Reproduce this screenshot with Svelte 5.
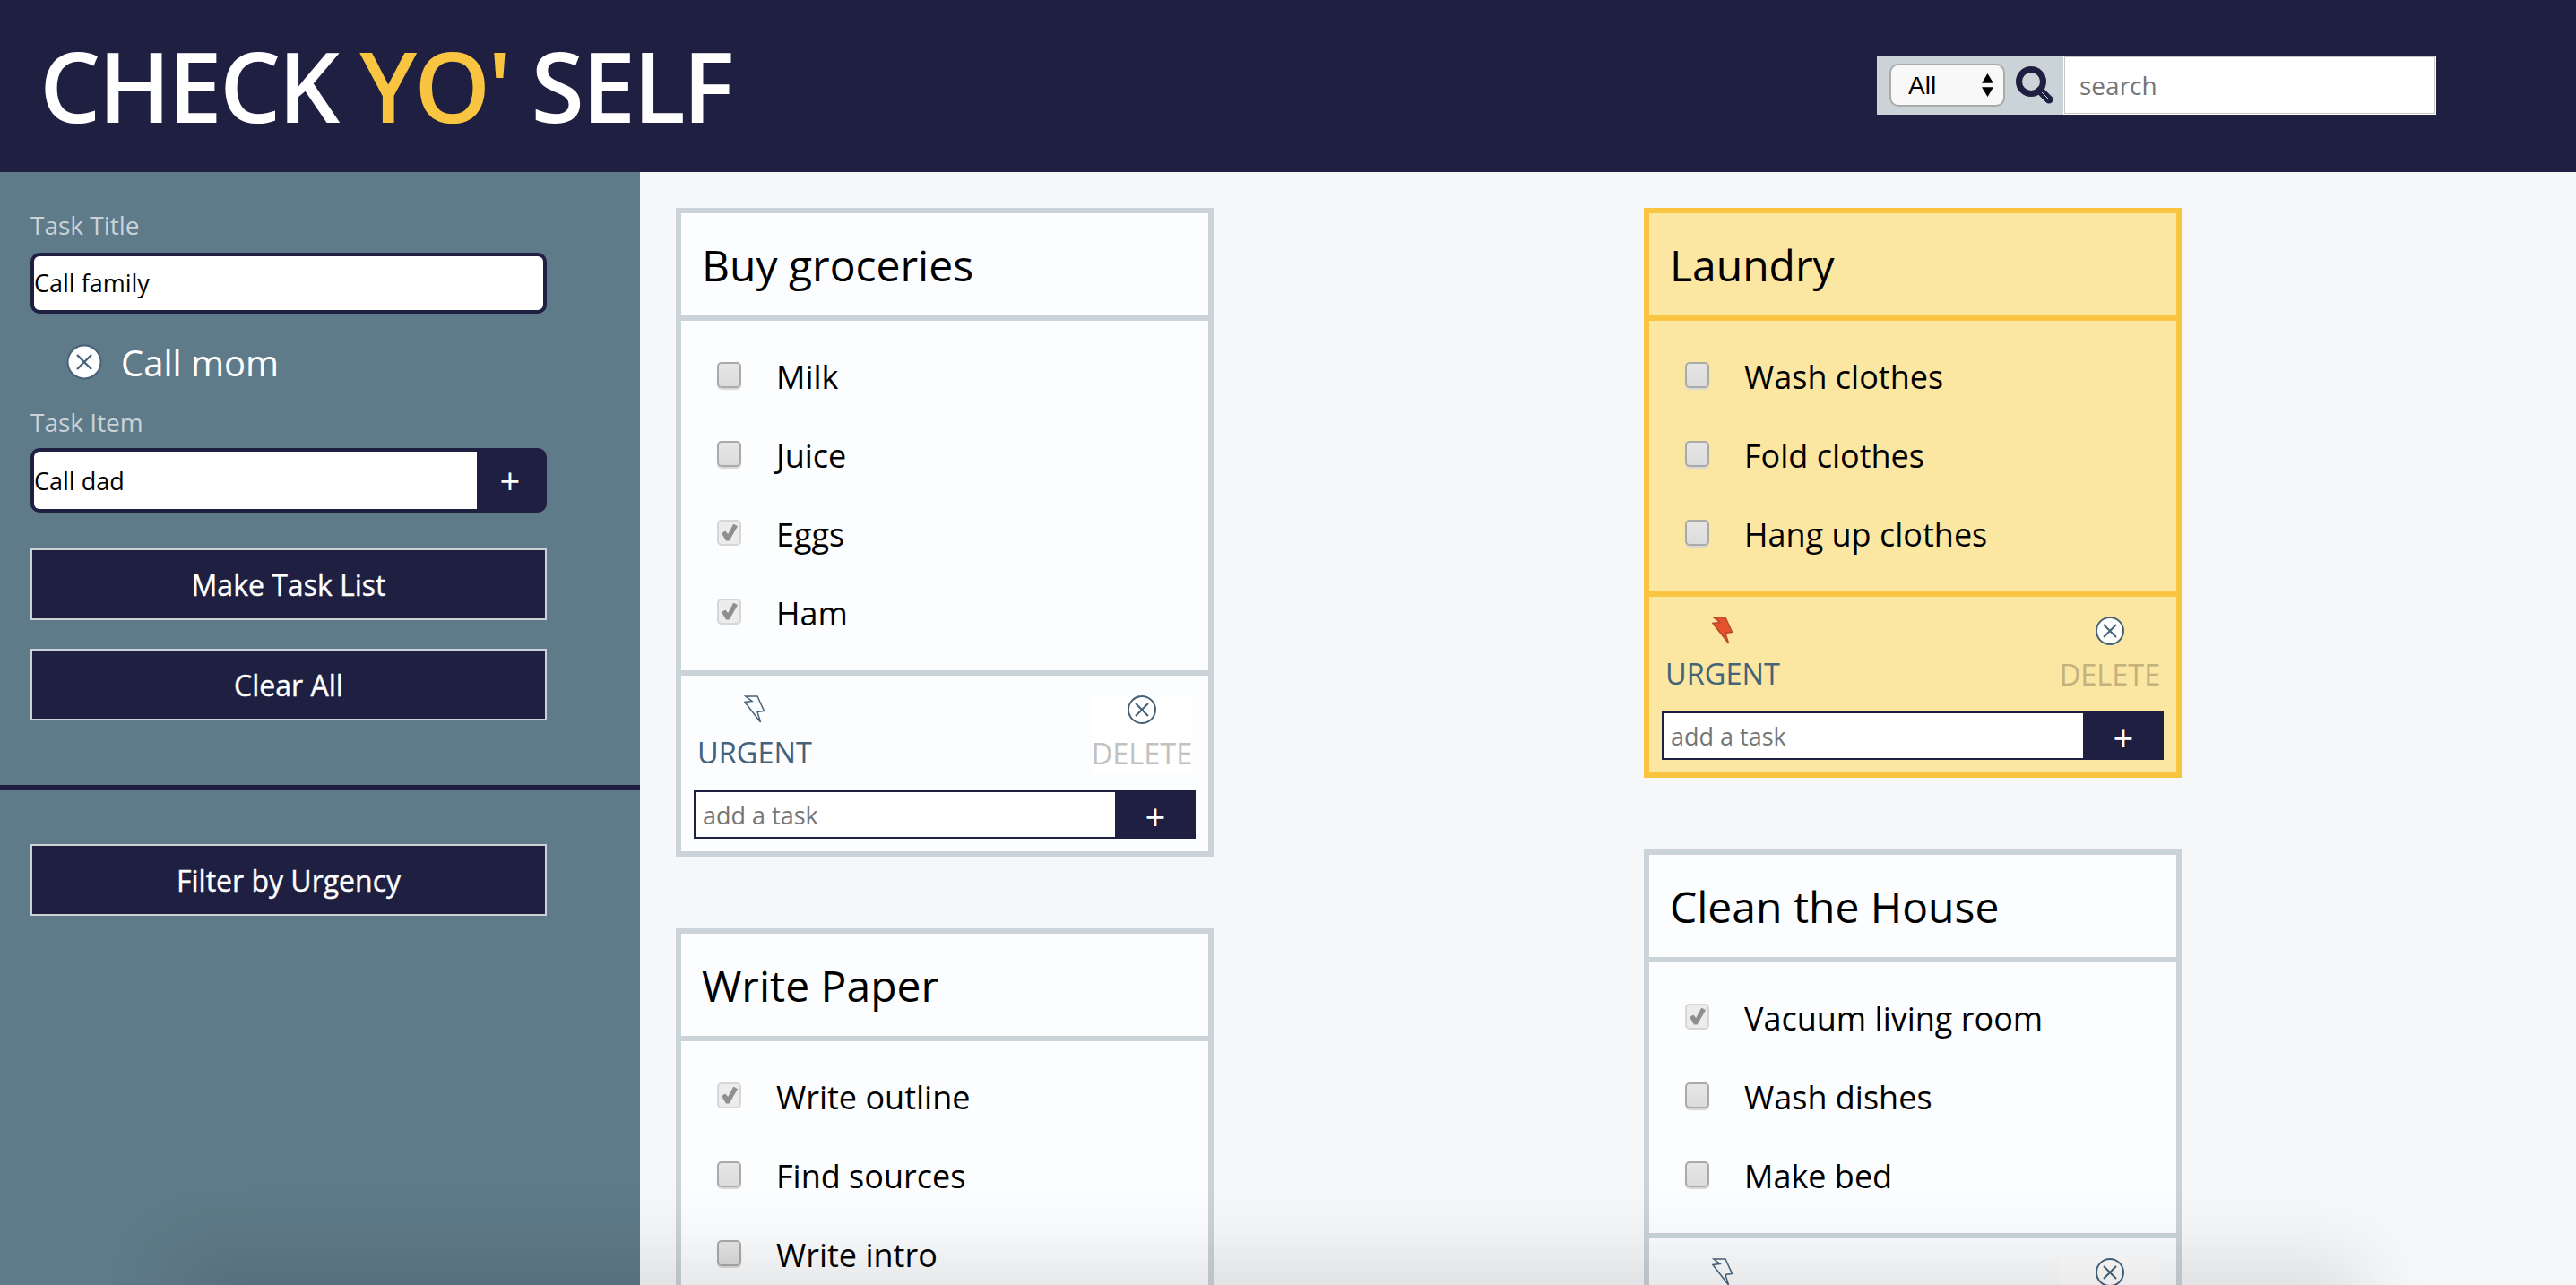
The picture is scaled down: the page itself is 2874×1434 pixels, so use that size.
<script>
  let columns = [
    [
      { title: "Buy groceries", items: [["Milk", false], ["Juice", false], ["Eggs", true], ["Ham", true]], urgent: false },
      { title: "Write Paper", items: [["Write outline", true], ["Find sources", false], ["Write intro", false]], urgent: false },
    ],
    [
      { title: "Laundry", items: [["Wash clothes", false], ["Fold clothes", false], ["Hang up clothes", false]], urgent: true },
      { title: "Clean the House", items: [["Vacuum living room", true], ["Wash dishes", false], ["Make bed", false]], urgent: false },
    ],
  ];
</script>

<div class="page">
  <header class="top">
    <h1>CHECK <span class="yo">YO'</span> SELF</h1>
    <div class="search">
      <div class="select-wrap">
        <select class="filter"><option>All</option></select>
        <svg class="arrows" viewBox="0 0 14 34" preserveAspectRatio="none">
          <path d="M7 0 L14 14 H0 Z M7 34 L0 20 H14 Z" fill="#000" />
        </svg>
      </div>
      <svg class="glass" viewBox="0 0 42 42" width="42" height="42">
        <circle cx="17" cy="17" r="13.500" fill="none" stroke="#1f2041" stroke-width="7" />
        <path d="M27 27 L37 37" stroke="#1f2041" stroke-width="9" stroke-linecap="round" />
        <path d="M29 29 L37 37" stroke="#c9d3d8" stroke-width="1" />
      </svg>
      <input class="search-box" placeholder="search" />
    </div>
  </header>

  <div class="body">
    <aside class="side">
      <div class="form">
        <label class="lbl" for="title">Task Title</label>
        <input id="title" class="title-input" value="Call family" />
        <div class="pending">
          <svg class="x" viewBox="0 0 40 40" width="40" height="40">
            <circle cx="20" cy="20" r="18.500" fill="#fff" stroke="#466279" stroke-width="2" />
            <path d="M12 12 L28 28 M28 12 L12 28" stroke="#466279" stroke-width="2.400" />
          </svg>
          <span>Call mom</span>
        </div>
        <label class="lbl" for="item">Task Item</label>
        <div class="item-row">
          <input id="item" value="Call dad" />
          <button class="plus">+</button>
        </div>
        <button class="wide make">Make Task List</button>
        <button class="wide clear">Clear All</button>
      </div>
      <div class="rule"></div>
      <button class="wide urgency">Filter by Urgency</button>
    </aside>

    <main class="board">
      {#each columns as col}
        <div class="col">
          {#each col as card}
            <section class="card" class:hot={card.urgent}>
              <h2>{card.title}</h2>
              <ul>
                {#each card.items as [text, done]}
                  <li><input type="checkbox" checked={done} /><span>{text}</span></li>
                {/each}
              </ul>
              <div class="foot">
                <div class="actions">
                  <div class="act urgent">
                    <svg viewBox="0 0 24 31" width="24" height="31">
                      <path d="M2 1 H15 L22.500 17.500 L15 18.500 L18.500 30 L1 7.500 L9 6.500 Z"
                        fill={card.urgent ? "#e4522c" : "none"}
                        stroke={card.urgent ? "#b9492e" : "#466279"}
                        stroke-width="1.500" />
                    </svg>
                    <span>URGENT</span>
                  </div>
                  <div class="act delete">
                    <svg viewBox="0 0 32 32" width="32" height="32">
                      <circle cx="16" cy="16" r="15" fill={card.urgent ? "#fff" : "none"} stroke="#466279" stroke-width="2" />
                      <path d="M9 9 L23 23 M23 9 L9 23" stroke="#466279" stroke-width="2" />
                    </svg>
                    <span>DELETE</span>
                  </div>
                </div>
                <div class="add">
                  <input placeholder="add a task" />
                  <button>+</button>
                </div>
              </div>
            </section>
          {/each}
        </div>
      {/each}
    </main>
  </div>
  <div class="fade"></div>
</div>

<style>
  :global(body) {
    margin: 0;
    overflow: hidden;
    font-family: "Open Sans", sans-serif;
  }

  .page {
    height: 1434px;
    overflow: hidden;
    position: relative;
    background: #f6f7f9;
  }

  .top {
    height: 192px;
    background: #1f2041;
    display: flex;
    align-items: center;
    justify-content: space-between;
    padding: 0 156px 0 44px;
    box-sizing: border-box;
  }

  h1 {
    margin: 0;
    font-size: 108px;
    font-weight: 600;
    color: #fff;
    letter-spacing: -3px;
    line-height: 1;
  }

  .yo {
    color: #f9c440;
  }

  .search {
    display: flex;
    align-items: center;
    height: 66px;
    width: 624px;
    margin-top: -2px;
    background: #c9d3d8;
    box-sizing: border-box;
    padding-left: 14px;
  }

  .select-wrap {
    position: relative;
    display: flex;
  }

  .filter {
    appearance: none;
    width: 129px;
    height: 48px;
    border: 2px solid #aaa;
    border-radius: 10px;
    background: #f8f8f8;
    font-family: "Liberation Sans", sans-serif;
    font-size: 28px;
    padding: 0 0 0 19px;
    color: #000;
  }

  .arrows {
    position: absolute;
    right: 13px;
    top: 11px;
    width: 13px;
    height: 26px;
    pointer-events: none;
  }

  .glass {
    margin: 0 11px 0 12px;
    flex: none;
  }

  .search-box {
    flex: 1;
    min-width: 0;
    height: 66px;
    box-sizing: border-box;
    border: 2px solid #c6c6c6;
    outline: 1px solid #fff;
    outline-offset: -1px;
    font-family: inherit;
    font-size: 28px;
    padding: 0 16px;
  }

  .body {
    display: flex;
    height: 1242px;
  }

  .side {
    width: 714px;
    flex: none;
    background: #5f7a88;
    box-sizing: border-box;
    padding-top: 40px;
  }

  .form {
    padding: 0 104px 0 34px;
    display: flex;
    flex-direction: column;
  }

  .lbl {
    font-size: 28px;
    line-height: 38px;
    color: #c9d3d8;
  }

  .title-input {
    margin-top: 12px;
    height: 68px;
    box-sizing: border-box;
    border: 4px solid #1f2041;
    border-radius: 10px;
    padding: 0 0 2px;
    font-family: inherit;
    font-size: 27px;
    background: #fff;
  }

  .pending {
    display: flex;
    align-items: center;
    gap: 21px;
    height: 80px;
    margin: 14px 0 8px 40px;
    font-size: 40px;
    color: #fff;
  }

  .item-row {
    display: flex;
    margin-top: 10px;
    height: 72px;
    border: 4px solid #1f2041;
    border-radius: 10px;
    background: #1f2041;
    box-sizing: border-box;
    overflow: hidden;
  }

  .item-row input {
    flex: 1;
    min-width: 0;
    border: 0;
    padding: 0;
    font-family: inherit;
    font-size: 27px;
    border-radius: 4px 0 0 4px;
  }

  .plus {
    width: 74px;
    flex: none;
    border: 0;
    background: #1f2041;
    color: #fff;
    font-family: inherit;
    font-size: 40px;
    font-weight: 500;
    padding: 0;
  }

  .wide {
    height: 80px;
    border: 2px solid #c9d3d8;
    background: #1f2041;
    color: #fff;
    font-family: inherit;
    font-size: 32px;
    font-weight: 500;
    -webkit-text-stroke: 0.4px #fff;
    padding: 0;
  }

  .make {
    margin-top: 40px;
  }

  .clear {
    margin-top: 32px;
  }

  .rule {
    height: 6px;
    margin-top: 72px;
    background: #1f2041;
  }

  .urgency {
    display: block;
    width: 576px;
    margin: 60px 0 0 34px;
  }

  .board {
    flex: 1;
    display: flex;
    gap: 480px;
    padding: 40px 0 0 40px;
    overflow: hidden;
  }

  .col {
    width: 600px;
    flex: none;
    display: flex;
    flex-direction: column;
    gap: 80px;
  }

  .card {
    flex: none;
    border: 6px solid #c9d3d8;
    background: #fcfdff;
  }

  .card h2 {
    margin: 0;
    height: 114px;
    display: flex;
    align-items: center;
    padding-left: 23px;
    font-size: 48px;
    font-weight: 400;
    color: #000;
  }

  .card ul {
    list-style: none;
    margin: 0;
    padding: 18px 0 20px;
    border-top: 6px solid #c9d3d8;
    border-bottom: 6px solid #c9d3d8;
  }

  .card li {
    height: 88px;
    display: flex;
    align-items: center;
    padding-left: 40px;
    font-size: 36px;
    color: #000;
  }

  .card li span {
    margin-left: 39px;
  }

  .card li input {
    appearance: none;
    position: relative;
    flex: none;
    width: 27px;
    height: 29px;
    margin: -4px 0 0;
    box-sizing: border-box;
    border: 2px solid #aaa;
    border-radius: 5px;
    background: linear-gradient(#e6e6e6, #dcdcdc);
    box-shadow: 0 2px 1px #d8d8d8;
  }

  .card li input:checked {
    border-color: #d6d6d6;
    background: #ececec;
    box-shadow: none;
  }

  .card li input:checked::after {
    content: "";
    position: absolute;
    left: 3px;
    top: 3px;
    width: 18px;
    height: 19px;
    background: #8f8f8f;
    clip-path: polygon(0 55%, 24% 42%, 40% 60%, 74% 0, 100% 14%, 48% 100%, 28% 100%);
  }

  .foot {
    padding: 22px 14px 14px;
  }

  .actions {
    display: flex;
    justify-content: space-between;
    height: 106px;
    padding: 0 4px;
  }

  .act {
    display: flex;
    flex-direction: column;
    align-items: center;
    gap: 10px;
    font-size: 32.500px;
    line-height: 46px;
  }

  .urgent {
    color: #466279;
  }

  .delete {
    color: #c2c2c2;
    background: #fff;
    height: 88px;
    width: 112px;
  }

  .hot .delete {
    color: #c4b27c;
    background: none;
  }

  .add {
    display: flex;
    height: 54px;
    border: 2px solid #1f2041;
    box-sizing: border-box;
    background: #1f2041;
  }

  .add input {
    flex: 1;
    min-width: 0;
    border: 0;
    padding: 0 8px;
    font-family: inherit;
    font-size: 27px;
    background: #fff;
  }

  .add button {
    width: 88px;
    flex: none;
    border: 0;
    background: #1f2041;
    color: #fff;
    font-family: inherit;
    font-size: 40px;
    font-weight: 500;
    padding: 0 0 0 2px;
  }

  .hot {
    border-color: #f9c440;
    background: #fbe6a2;
  }

  .hot ul {
    border-color: #f9c440;
  }

  .fade {
    position: absolute;
    left: 200px;
    right: 240px;
    bottom: -80px;
    height: 110px;
    background: rgba(0, 0, 0, 0.1);
    filter: blur(40px);
    pointer-events: none;
  }
</style>
